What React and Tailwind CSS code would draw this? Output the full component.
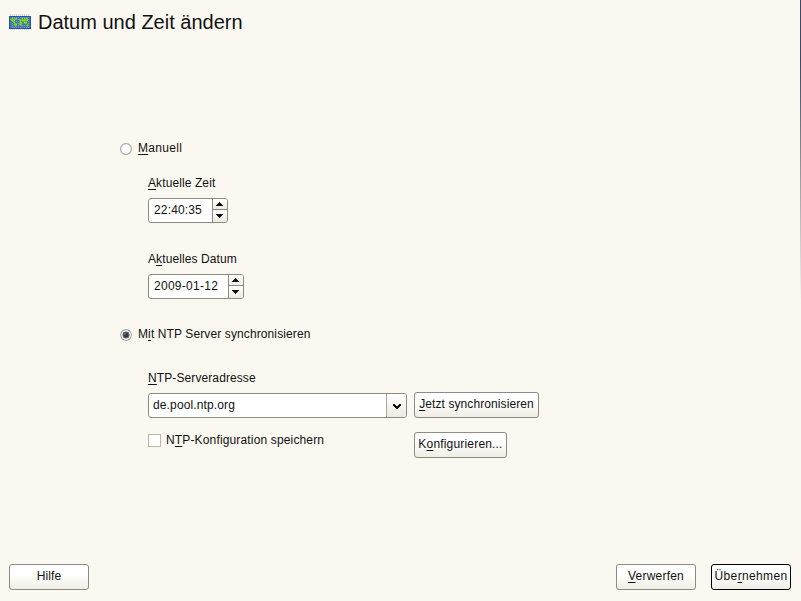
const WORLD = [
  '......................',
  '..gg.ggg.....g.gggg...',
  '.gggggg...gggggggggg..',
  '..gggg....ggggggggg...',
  '...gg......g.ggggg....',
  '....gg....ggg..ggg....',
  '.....gg...gggg..g.....',
  '.....ggg..ggg.....g...',
  '.....gg....gg....ggg..',
  '......g...........g...',
  '......................',
];

function MapIcon() {
  return (
    <svg className="block h-4 w-[22px] shrink-0" viewBox="0 0 22 16" shapeRendering="crispEdges">
      {Array.from({ length: 10 }, (_, i) => (
        <rect key={i} x={1 + i * 2} y="0" width="1" height="16" fill="#d3d2cc" />
      ))}
      <rect x="0" y="2" width="22" height="13" fill="#2455a4" />
      <rect x="1" y="3" width="20" height="11" fill="#4678b4" />
      <path
        d="M3.5 3v11M5.5 3v11M7.5 3v11M9.5 3v11M11.5 3v11M13.5 3v11M15.5 3v11M17.5 3v11M19.5 3v11"
        stroke="#a9cbe6"
        strokeOpacity=".4"
        strokeDasharray="1 1"
      />
      {WORLD.map((row, y) =>
        row.split('').map((c, x) =>
          c === 'g' ? (
            <rect key={`${x}-${y}`} x={x} y={y + 3} width="1" height="1" fill={x % 2 && y % 2 ? '#8fdc3c' : '#6cc41c'} />
          ) : null
        )
      )}
    </svg>
  );
}

function Text({ before = '', hot = '', after = '', className = '' }) {
  return (
    <span className={`block whitespace-pre text-xs leading-4 ${className}`}>
      {before}
      <span className="underline decoration-1 underline-offset-2 [text-decoration-skip-ink:none]">{hot}</span>
      {after}
    </span>
  );
}

function Button({ className = '', strong = false, children }) {
  return (
    <button
      type="button"
      className={`flex shrink-0 justify-center rounded-[3px] border bg-linear-to-b from-white from-40% to-[#f0ede5] pt-[3px] ${strong ? 'border-black' : 'border-[#8f8b80]'} ${className}`}
    >
      {children}
    </button>
  );
}

function Radio({ checked = false }) {
  return (
    <svg className="mt-[3px] block size-3 shrink-0" viewBox="0 0 12 12">
      <circle cx="6" cy="6" r="5.4" fill="#fff" stroke="#aaa39d" strokeWidth="1.1" />
      {checked && <circle cx="6" cy="6" r="3.3" fill="#343c46" stroke="#8c9299" strokeWidth=".7" />}
      {checked && <circle cx="5" cy="5" r=".8" fill="#8995a2" />}
    </svg>
  );
}

function SpinBox({ value, className, textClass }) {
  return (
    <div className={`flex h-[25px] overflow-hidden rounded-[3px] border border-[#8f8b80] bg-white ${className}`}>
      <span className={`flex-1 pt-[3px] pl-[5px] text-xs leading-4 whitespace-pre ${textClass}`}>{value}</span>
      <div className="flex w-[15px] flex-col border-l border-[#8f8b80]">
        <div className="h-[11px] border-b border-[#8f8b80] bg-linear-to-b from-white to-[#eeebe3]">
          <svg className="block h-2.5 w-[14px]" viewBox="0 0 14 10" shapeRendering="crispEdges">
            <path d="M6 3h1v1h1v1h1v1h1v1H3V6h1V5h1V4h1z" fill="#111" />
          </svg>
        </div>
        <div className="flex-1 bg-linear-to-b from-white to-[#eeebe3]">
          <svg className="block h-3 w-[14px]" viewBox="0 0 14 12" shapeRendering="crispEdges">
            <path d="M3 4h7v1H9v1H8v1H7v1H6V7H5V6H4V5H3z" fill="#111" />
          </svg>
        </div>
      </div>
    </div>
  );
}

export default function App() {
  return (
    <div className="flex h-[601px] w-[801px] overflow-hidden bg-[#fbf8f1] font-['Liberation_Sans',Arial,sans-serif] text-[#111]">
      <div className="flex min-w-0 flex-1 flex-col">
        <header className="flex h-[140px] items-start gap-[7px] pl-[9px]">
          <div className="pt-[14px]"><MapIcon /></div>
          <h1 className="pt-[10px] text-[20px] leading-6 whitespace-pre">Datum und Zeit ändern</h1>
        </header>

        <main className="flex h-[423px] flex-col pl-[120px]">
          <div className="flex h-[35px] gap-1.5">
            <Radio />
            <Text hot="M" after="anuell" className="tracking-[0.3px]" />
          </div>
          <div className="flex h-[151px] flex-col pl-7">
            <Text hot="A" after="ktuelle Zeit" className="h-[23px] tracking-[0.1px]" />
            <SpinBox value="22:40:35" className="w-20" textClass="tracking-[0.15px]" />
            <Text before="A" hot="k" after="tuelles Datum" className="mt-7 h-[23px] tracking-[0.1px]" />
            <SpinBox value="2009-01-12" className="w-24" textClass="tracking-[0.27px]" />
          </div>
          <div className="flex h-11 gap-1.5">
            <Radio checked />
            <Text before="M" hot="i" after="t NTP Server synchronisieren" className="tracking-[0.11px]" />
          </div>
          <div className="flex gap-[7px] pl-7">
            <div className="w-[259px]">
              <Text hot="N" after="TP-Serveradresse" className="h-[23px] tracking-[0.1px]" />
              <div className="flex h-[25px] overflow-hidden rounded-[3px] border border-[#8f8b80] bg-white">
                <span className="flex-1 pt-[3px] pl-1 text-xs leading-4 tracking-[0.13px]">de.pool.ntp.org</span>
                <div className="w-5 border-l border-[#aaa69c] bg-linear-to-b from-white to-[#eeebe3]">
                  <svg className="block h-[23px] w-[19px]" viewBox="0 0 19 23" shapeRendering="crispEdges">
                    <path d="M6 10h2v1h1v1h2v-1h1v-1h2v2h-1v1h-1v1h-1v1H9v-1H8v-1H7v-1H6z" fill="#111" />
                  </svg>
                </div>
              </div>
              <div className="mt-[14px] flex gap-[5px]">
                <span className="mt-0.5 size-[13px] border border-[#bbb7ac] bg-white" />
                <Text before="N" hot="T" after="P-Konfiguration speichern" className="tracking-[0.15px]" />
              </div>
            </div>
            <div className="flex flex-col items-start gap-[14px] pt-[22px]">
              <Button className="h-[26px] w-[125px]"><Text hot="J" after="etzt synchronisieren" className="tracking-[0.09px]" /></Button>
              <Button className="h-[26px] w-[93px]"><Text before="K" hot="o" after="nfigurieren..." className="tracking-[0.18px]" /></Button>
            </div>
          </div>
        </main>

        <footer className="flex pt-px pr-[9px] pl-[9px]">
          <Button className="h-[26px] w-20"><Text before="Hilfe" className="tracking-[0.1px]" /></Button>
          <div className="flex-1" />
          <Button className="h-[26px] w-20"><Text hot="V" after="erwerfen" className="tracking-[0.22px]" /></Button>
          <Button className="ml-[15px] h-[26px] w-20" strong><Text before="Übe" hot="r" after="nehmen" className="tracking-[0.35px]" /></Button>
        </footer>
      </div>
      <div className="h-[300px] w-px bg-linear-to-b from-[#34496b] from-20% via-[#8e949b] via-55% to-[#fbf8f1]" />
    </div>
  );
}
